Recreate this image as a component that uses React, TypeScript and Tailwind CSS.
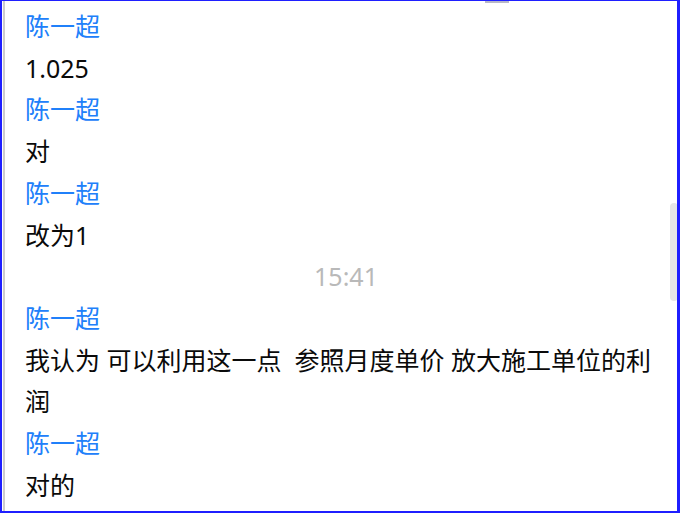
import React from 'react';

type Item =
  | { kind: 'msg'; name: string; text: string }
  | { kind: 'time'; text: string };

const items: Item[] = [
  { kind: 'msg', name: '陈一超', text: '1.025' },
  { kind: 'msg', name: '陈一超', text: '对' },
  { kind: 'msg', name: '陈一超', text: '改为1' },
  { kind: 'time', text: '15:41' },
  { kind: 'msg', name: '陈一超', text: '我认为 可以利用这一点\u00a0 参照月度单价 放大施工单位的利润' },
  { kind: 'msg', name: '陈一超', text: '对的' },
];

export default function App() {
  return (
    <div className="relative w-[680px] h-[513px] overflow-hidden bg-white border-t border-l-2 border-r-[3px] border-b-2 border-[#1f1fff]">
      <div className="h-full ml-px border-l-2 border-[#cdcdcd] flex">
        <div
          className="flex-1 pl-5 pr-[10px] pt-[5px] text-[25px] leading-[41.7px] text-[#0a0a0a]"
          style={{ fontFamily: '"Noto Sans", "Noto Sans CJK SC", sans-serif' }}
        >
          {items.map((it, i) =>
            it.kind === 'time' ? (
              <div key={i} className="text-center text-[#b9b9b9]">
                {it.text}
              </div>
            ) : (
              <div key={i}>
                <div className="text-[#2080fa]">{it.name}</div>
                <div className="break-all">{it.text}</div>
              </div>
            )
          )}
        </div>
      </div>
      {/* scrollbar remnants */}
      <div className="absolute top-0 left-[483px] w-[24px] h-[2px] bg-[#b8b8c8]" />
      <div className="absolute top-[202px] left-[668px] w-[8px] h-[98px] rounded-md bg-[#e6e6e6]" />
    </div>
  );
}
